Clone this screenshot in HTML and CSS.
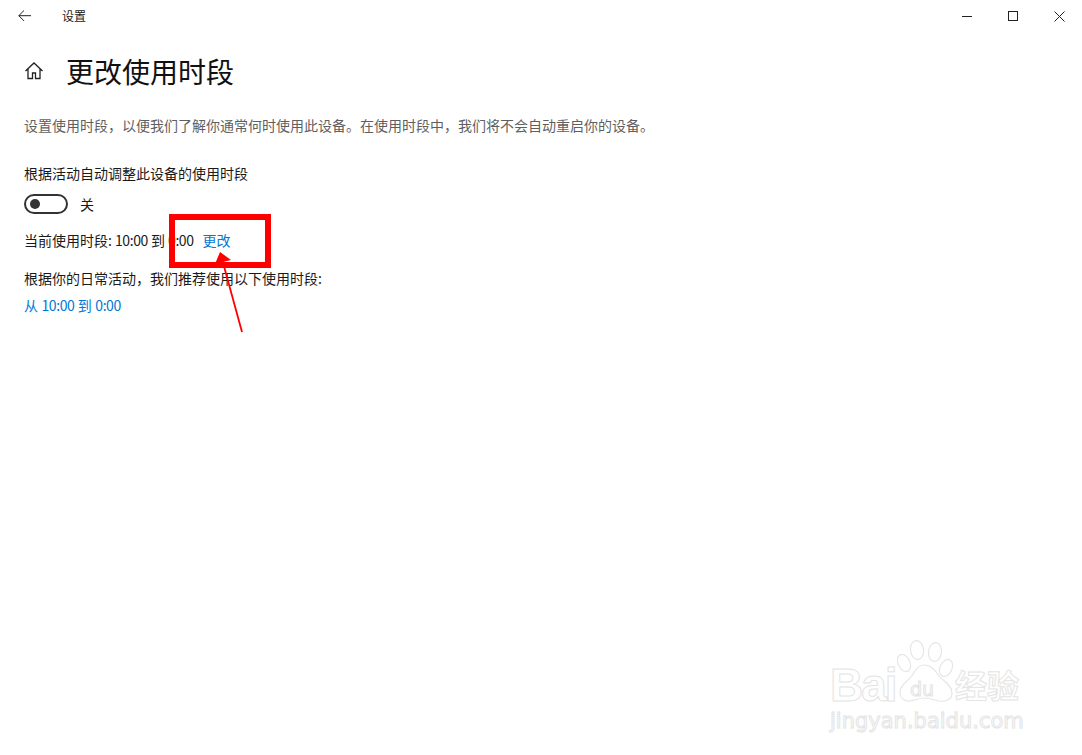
FILE: index.html
```html
<!DOCTYPE html>
<html lang="zh-CN">
<head>
<meta charset="utf-8">
<title>设置</title>
<link rel="stylesheet" href="styles.css">
</head>
<body>
<div class="window">
  <header class="titlebar">
    <div class="titlebar-left">
      <svg class="back" width="14" height="12" viewBox="0 0 14 12"><path d="M6 .5 .8 5.700 6 10.900M.8 5.700H13" fill="none" stroke="#222" stroke-width="1"/></svg>
      <span class="app-name">设置</span>
    </div>
    <div class="controls">
      <span class="control"><svg width="11" height="11" viewBox="0 0 11 11"><path d="M0 5.500H10" stroke="#222" stroke-width="1"/></svg></span>
      <span class="control"><svg width="11" height="11" viewBox="0 0 11 11"><rect x=".5" y=".5" width="9" height="9" fill="none" stroke="#222"/></svg></span>
      <span class="control"><svg width="11" height="11" viewBox="0 0 11 11"><path d="M.5 .5 10.500 10.500M10.500 .5 .5 10.500" stroke="#222" stroke-width="1"/></svg></span>
    </div>
  </header>
  <main class="content">
    <div class="heading-row">
      <svg class="home" width="20" height="20" viewBox="0 0 20 20"><path d="M1.500 10 10 2l8.500 8M4 8v9.500h4.500V12h3v5.500H16V8" fill="none" stroke="#222" stroke-width="1.300"/></svg>
      <h1>更改使用时段</h1>
    </div>
    <p class="description">设置使用时段，以便我们了解你通常何时使用此设备。在使用时段中，我们将不会自动重启你的设备。</p>
    <p class="label">根据活动自动调整此设备的使用时段</p>
    <div class="toggle-row">
      <span class="toggle"><span class="knob"></span></span>
      <span>关</span>
    </div>
    <p class="current"><span>当前使用时段:</span> <span class="time">10:00</span> 到 <span class="time">0:00</span><a class="link change">更改</a></p>
    <p class="recommend">根据你的日常活动，我们推荐使用以下使用时段:</p>
    <a class="link range">从 <span class="time">10:00</span> 到 <span class="time">0:00</span></a>
  </main>

  <div class="red-box"></div>
  <svg class="arrow" width="40" height="90" viewBox="0 0 40 90"><path d="M33 83 13 10" stroke="#f00" stroke-width="1.800" fill="none"/><path d="M11 3 6 15 22 11Z" fill="#f00"/></svg>

  <div class="watermark">
    <div class="wm-top">
      <span class="wm-bai">Bai</span>
      <span class="wm-paw">
        <svg width="60" height="64" viewBox="0 0 60 64"><g fill="#fff" stroke="#e6e6e6" stroke-width="1.200"><ellipse cx="7" cy="23" rx="6" ry="9" transform="rotate(-25 7 23)"/><ellipse cx="20" cy="10" rx="6.500" ry="9.500" transform="rotate(-8 20 10)"/><ellipse cx="38" cy="12" rx="6.500" ry="9.500" transform="rotate(8 38 12)"/><ellipse cx="49" cy="28" rx="6" ry="9" transform="rotate(25 49 28)"/><path d="M27 25c7 0 11 5 15 11 4 5 13 9 13 17 0 7-7 9-13 8-5-1-10-3-15-3s-10 3-15 3c-6 0-9-4-9-9 0-7 7-10 11-15 4-5 6-12 13-12Z"/></g></svg>
        <span class="wm-du">du</span>
      </span>
      <span class="wm-cn">经验</span>
    </div>
    <div class="wm-url">jingyan.baidu.com</div>
  </div>
</div>
</body>
</html>
```
FILE: styles.css
```css
* { box-sizing: border-box; }
html, body { margin: 0; height: 100%; background: #fff; }
body {
  font-family: "Noto Sans CJK SC", "Noto Sans", sans-serif;
  font-size: 14px;
  color: #1a1a1a;
  overflow: hidden;
}
p, h1 { margin: 0; }
.window { position: relative; width: 1082px; height: 755px; }

.titlebar { display: flex; justify-content: space-between; height: 32px; }
.titlebar-left { display: flex; align-items: center; padding-left: 18px; }
.back { margin-right: 30px; }
.app-name { font-size: 12px; line-height: 32px; }
.controls { display: flex; }
.control { width: 46px; height: 32px; display: flex; align-items: center; justify-content: center; }

.content { padding-left: 24px; }
.heading-row { display: flex; align-items: center; height: 40px; margin-top: 19px; }
.home { margin-right: 22px; }
h1 { font-size: 28px; font-weight: 400; line-height: 40px; color: #111; }
.description { margin-top: 24px; line-height: 20px; color: #5f5f5f; }
.label { margin-top: 28px; line-height: 20px; }
.toggle-row { display: flex; align-items: center; gap: 12px; margin-top: 11px; height: 20px; }
.toggle { display: flex; align-items: center; width: 44px; height: 20px; border: 2px solid #333; border-radius: 10px; padding-left: 4px; }
.knob { width: 10px; height: 10px; border-radius: 50%; background: #333; }
.current { margin-top: 16px; line-height: 20px; }
.time { letter-spacing: -0.45px; }
.link { color: #0078d4; }
.change { margin-left: 9px; }
.recommend { margin-top: 18px; line-height: 20px; }
.range { display: block; margin-top: 7px; line-height: 20px; word-spacing: 0.4px; }

.red-box { position: absolute; left: 169px; top: 214px; width: 102px; height: 54px; border: 6px solid #f00; }
.arrow { position: absolute; left: 209px; top: 249px; }

.watermark { position: absolute; left: 830px; top: 640px; width: 200px; color: #fff; -webkit-text-stroke: 1px #e4e4e4; }
.wm-top { position: relative; height: 68px; }
.wm-bai { position: absolute; left: 0; top: 21px; font-family: "Liberation Sans", sans-serif; font-size: 46px; font-weight: 700; line-height: 48px; letter-spacing: -2px; }
.wm-paw { position: absolute; left: 67px; top: 0; width: 60px; height: 64px; }
.wm-paw svg { display: block; }
.wm-du { position: absolute; left: 13px; top: 36px; font-family: "DejaVu Sans", sans-serif; font-size: 19px; line-height: 26px; }
.wm-cn { position: absolute; left: 125px; top: 24px; font-size: 32px; line-height: 40px; font-weight: 700; letter-spacing: 0; white-space: nowrap; }
.wm-url { font-family: "DejaVu Sans", sans-serif; font-size: 21px; line-height: 26px; white-space: nowrap; }
```
